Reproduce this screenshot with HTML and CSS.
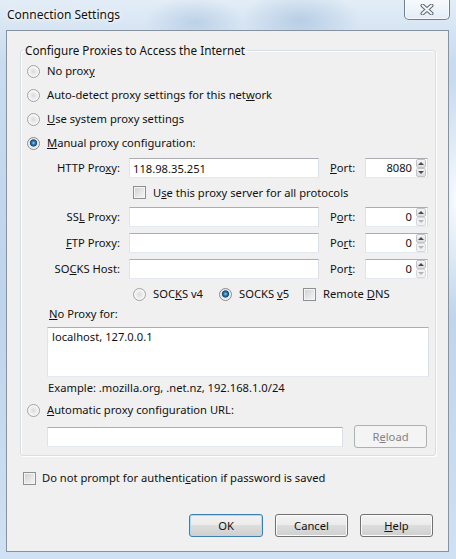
FILE: index.html
```html
<!DOCTYPE html>
<html lang="en">
<head>
  <meta charset="UTF-8">
  <meta name="viewport" content="width=device-width, initial-scale=1.0">
  <title>Connection Settings</title>
  <link rel="stylesheet" href="styles.css">
</head>
<body>
  <div class="window">
    <div class="titlebar">
      <span class="title">Connection Settings</span>
      <button class="close" aria-label="Close">
        <svg width="14" height="11" viewBox="0 0 14 11">
          <path d="M2.5 1.5 L11.5 9.5 M11.5 1.5 L2.5 9.5" stroke="#5f6874" stroke-width="4" stroke-linecap="round"/>
          <path d="M2.5 1.5 L11.5 9.5 M11.5 1.5 L2.5 9.5" stroke="#f4f6f8" stroke-width="2" stroke-linecap="round"/>
        </svg>
      </button>
    </div>

    <div class="client">
      <fieldset class="group">
        <legend>Configure Proxies to Access the Internet</legend>

        <label class="opt"><input type="radio" name="mode"><span>No prox<u>y</u></span></label>
        <label class="opt"><input type="radio" name="mode"><span>Auto-detect proxy settings for this net<u>w</u>ork</span></label>
        <label class="opt"><input type="radio" name="mode"><span><u>U</u>se system proxy settings</span></label>
        <label class="opt"><input type="radio" name="mode" checked><span><u>M</u>anual proxy configuration:</span></label>

        <div class="proxies">
          <label class="lbl">HTTP Pro<u>x</u>y:</label>
          <input class="field" type="text" value="118.98.35.251">
          <label class="lbl port"><u>P</u>ort:</label>
          <div class="spin">
            <input type="text" value="8080">
            <span class="arrows"><span class="up"></span><span class="down"></span></span>
          </div>

          <label class="opt all"><input type="checkbox"><span>U<u>s</u>e this proxy server for all protocols</span></label>

          <label class="lbl">SS<u>L</u> Proxy:</label>
          <input class="field" type="text">
          <label class="lbl port">P<u>o</u>rt:</label>
          <div class="spin">
            <input type="text" value="0">
            <span class="arrows"><span class="up"></span><span class="down off"></span></span>
          </div>

          <label class="lbl"><u>F</u>TP Proxy:</label>
          <input class="field" type="text">
          <label class="lbl port">Po<u>r</u>t:</label>
          <div class="spin">
            <input type="text" value="0">
            <span class="arrows"><span class="up"></span><span class="down off"></span></span>
          </div>

          <label class="lbl">SO<u>C</u>KS Host:</label>
          <input class="field" type="text">
          <label class="lbl port">Por<u>t</u>:</label>
          <div class="spin">
            <input type="text" value="0">
            <span class="arrows"><span class="up"></span><span class="down off"></span></span>
          </div>
        </div>

        <div class="socks">
          <label class="opt v4"><input type="radio" name="socks"><span>SOC<u>K</u>S v4</span></label>
          <label class="opt v5"><input type="radio" name="socks" checked><span>SOCKS <u>v</u>5</span></label>
          <label class="opt"><input type="checkbox"><span>Remote <u>D</u>NS</span></label>
        </div>

        <div class="noproxy">
          <div class="caption"><u>N</u>o Proxy for:</div>
          <textarea>localhost, 127.0.0.1</textarea>
          <div class="example">Example: .mozilla.org, .net.nz, 192.168.1.0/24</div>
        </div>

        <label class="opt auto"><input type="radio" name="mode"><span><u>A</u>utomatic proxy configuration URL:</span></label>
        <div class="urlrow">
          <input class="field url" type="text">
          <button class="btn" disabled>R<u>e</u>load</button>
        </div>
      </fieldset>

      <label class="opt auth"><input type="checkbox"><span>Do not prompt for authenti<u>c</u>ation if password is saved</span></label>

      <div class="buttons">
        <button class="btn default">OK</button>
        <button class="btn">Cancel</button>
        <button class="btn"><u>H</u>elp</button>
      </div>
    </div>
  </div>
</body>
</html>
```

FILE: styles.css
```css
* {
  box-sizing: border-box;
}

body {
  margin: 0;
  font-family: 'Noto Sans', 'Liberation Sans', sans-serif;
  font-size: 11.2px;
  line-height: 16px;
  color: #111;
}

.window {
  width: 456px;
  height: 559px;
  display: flex;
  flex-direction: column;
  background:
    radial-gradient(ellipse 60px 30px at 300px 20px, rgba(120,160,200,.35), transparent),
    radial-gradient(ellipse 50px 25px at 195px 22px, rgba(120,160,200,.3), transparent),
    radial-gradient(ellipse 30px 120px at 456px 200px, rgba(255,255,255,.9), transparent),
    linear-gradient(to bottom, #e3edf7 0, #c9dcef 60px, #bed4ea 300px, #cfe1f2 100%);
}

.titlebar {
  height: 30px;
  display: flex;
  justify-content: space-between;
  align-items: flex-start;
  padding-left: 7px;
}

.title {
  font-size: 12px;
  line-height: 30px;
  text-shadow: 0 0 6px #fff, 0 0 3px #fff;
}

.close {
  width: 46px;
  height: 21px;
  margin: -1px 6px 0 0;
  padding: 0;
  display: flex;
  align-items: center;
  justify-content: center;
  border: 1px solid #6f7f92;
  border-top: none;
  border-radius: 0 0 5px 5px;
  background: linear-gradient(rgba(255,255,255,.75), rgba(235,242,250,.45));
  box-shadow: inset 0 0 0 1px rgba(255,255,255,.7);
}

.client {
  flex: 1;
  margin: 0 7px 7px 6px;
  padding: 11px 12px 0 13px;
  background: #f0f0f0;
  border: 1px solid #8692a0;
}

.group {
  margin: 0;
  padding: 1px 6px 7px 6px;
  border: 1px solid #d5dfe5;
  border-radius: 3px;
  box-shadow: inset 1px 1px 0 #fff, 1px 1px 0 #fff;
}

legend {
  margin-left: -4px;
  padding: 0 2px;
  font-size: 11.7px;
}

.opt {
  display: flex;
  align-items: center;
  gap: 7px;
  height: 24px;
  white-space: nowrap;
}

input[type="radio"],
input[type="checkbox"] {
  appearance: none;
  width: 13px;
  height: 13px;
  margin: 0;
  flex: none;
  border: 1px solid #8e8f8f;
}

input[type="radio"] {
  border-radius: 50%;
  border-color: #a3a3a3;
  background: radial-gradient(circle at 50% 50%, #d9dadb 0, #ececec 3px, #fbfbfb 6px);
}

input[type="radio"]:checked {
  border-color: #8a8a8a;
  background: radial-gradient(circle at 50% 45%, #8fd8f8 0, #2b7fbb 1.6px, #17496f 3.2px, #dfe3e6 4px, #fbfbfb 6px);
}

input[type="checkbox"] {
  background: linear-gradient(135deg, #cdd0d5, #f7f7f7);
  box-shadow: inset 0 0 0 1px #f4f4f4;
}

.field,
textarea,
.spin {
  height: 20px;
  background: #fff;
  border: 1px solid;
  border-color: #abadb3 #dbdfe6 #e3e9ef #e2e3ea;
  font: inherit;
  color: #111;
}

.field {
  width: 100%;
  padding: 0 3px;
  margin: 0;
}

.proxies {
  display: grid;
  grid-template-columns: 93px 190px 28px 63px;
  grid-template-rows: 26px 23px 26px 26px 26px;
  column-gap: 9px;
  align-items: center;
}

.lbl {
  text-align: right;
  white-space: nowrap;
}

.lbl.port {
  text-align: left;
  padding-left: 2px;
}

.all {
  grid-column: 2 / -1;
  height: 23px;
  padding-left: 4px;
}

.spin {
  display: flex;
  align-items: stretch;
  padding: 0 1px 0 0;
}

.spin input {
  flex: 1;
  min-width: 0;
  border: none;
  padding: 0 4px 0 0;
  margin: 0;
  text-align: right;
  font: inherit;
  color: #111;
  background: transparent;
}

.arrows {
  width: 10px;
  display: flex;
  flex-direction: column;
}

.arrows span {
  flex: 1;
  position: relative;
  border: 1px solid #c0c4c8;
  border-radius: 2px;
  background: linear-gradient(#f6f6f6, #dcdcdc);
}

.arrows span::after {
  content: '';
  position: absolute;
  left: 1px;
  top: 2px;
  border-left: 3px solid transparent;
  border-right: 3px solid transparent;
}

.arrows .up::after {
  border-bottom: 3px solid #4a4a4a;
}

.arrows .down::after {
  border-top: 3px solid #4a4a4a;
}

.arrows .down.off {
  border-color: #d6d8da;
  background: #f2f2f2;
}

.arrows .down.off::after {
  border-top-color: #b4b4b4;
}

.socks {
  display: flex;
  height: 24px;
  margin-left: 106px;
}

.socks .v4 {
  width: 86px;
}

.socks .v5 {
  width: 84px;
}

.noproxy {
  margin-left: 20px;
  width: 382px;
}

.caption {
  padding-left: 2px;
}

textarea {
  display: block;
  width: 100%;
  height: 50px;
  margin: 5px 0 3px;
  padding: 1px 4px;
  resize: none;
}

.example {
  padding-left: 1px;
}

.auto {
  margin-top: 2px;
}

.urlrow {
  display: flex;
  align-items: center;
  gap: 11px;
  height: 23px;
  margin: 3px 0 0 20px;
}

.url {
  width: 296px;
}

.btn {
  width: 73px;
  height: 23px;
  padding: 0;
  font: inherit;
  color: #111;
  border: 1px solid #707070;
  border-radius: 3px;
  background: linear-gradient(#f2f2f2 0, #ebebeb 50%, #dddddd 50%, #cfcfcf 100%);
  box-shadow: inset 0 0 0 1px #fbfbfb;
}

.btn:disabled {
  color: #838383;
  border-color: #adb2b5;
  background: #f4f4f4;
  box-shadow: none;
}

.btn.default {
  width: 74px;
  border-color: #3c7fb1;
  box-shadow: inset 0 0 0 1px #a8dcf7;
}

.auth {
  margin: 10px 0 0 3px;
  gap: 6px;
}

.buttons {
  display: flex;
  justify-content: flex-end;
  gap: 12px;
  margin: 24px 3px 0 0;
}
```
